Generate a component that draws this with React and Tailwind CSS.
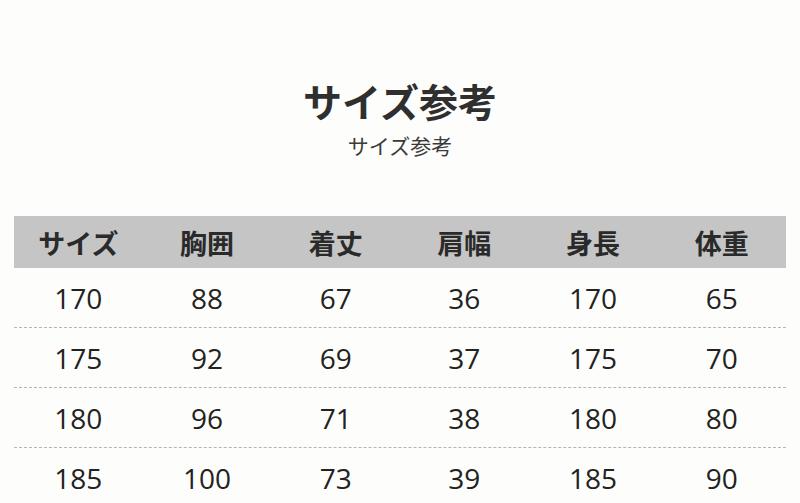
import React from "react";

const headers = ["サイズ", "胸囲", "着丈", "肩幅", "身長", "体重"];
const rows = [
  ["170", "88", "67", "36", "170", "65"],
  ["175", "92", "69", "37", "175", "70"],
  ["180", "96", "71", "38", "180", "80"],
  ["185", "100", "73", "39", "185", "90"],
];

export default function App() {
  return (
    <div
      className="w-[800px] h-[503px] overflow-hidden bg-[#fdfdfb] flex flex-col items-center"
      style={{ fontFamily: '"Noto Sans CJK JP", "Noto Sans", sans-serif' }}
    >
      <div className="mt-[81px] h-[38px] leading-[38px] text-[39px] font-bold text-[#2f2f2f]">
        サイズ参考
      </div>
      <div className="mt-[16px] h-[20px] leading-[20px] text-[21px] text-[#3a3a3a]">
        サイズ参考
      </div>
      <div className="mt-[61px] w-[772px] flex flex-col">
        <div className="grid grid-cols-6 h-[52px] bg-[#c5c5c5] items-center">
          {headers.map((h) => (
            <div key={h} className="text-center text-[27px] font-bold text-[#2a2a2a] leading-none">
              {h}
            </div>
          ))}
        </div>
        {rows.map((r, i) => (
          <div
            key={i}
            className={
              "grid grid-cols-6 h-[60px] items-center " +
              (i < rows.length - 1 ? "border-b border-dashed border-[#b5b5b5]" : "")
            }
          >
            {r.map((c, j) => (
              <div
                key={j}
                className="text-center text-[28px] text-[#222] leading-none"
                style={{ fontFamily: '"Open Sans", sans-serif' }}
              >
                {c}
              </div>
            ))}
          </div>
        ))}
      </div>
    </div>
  );
}
